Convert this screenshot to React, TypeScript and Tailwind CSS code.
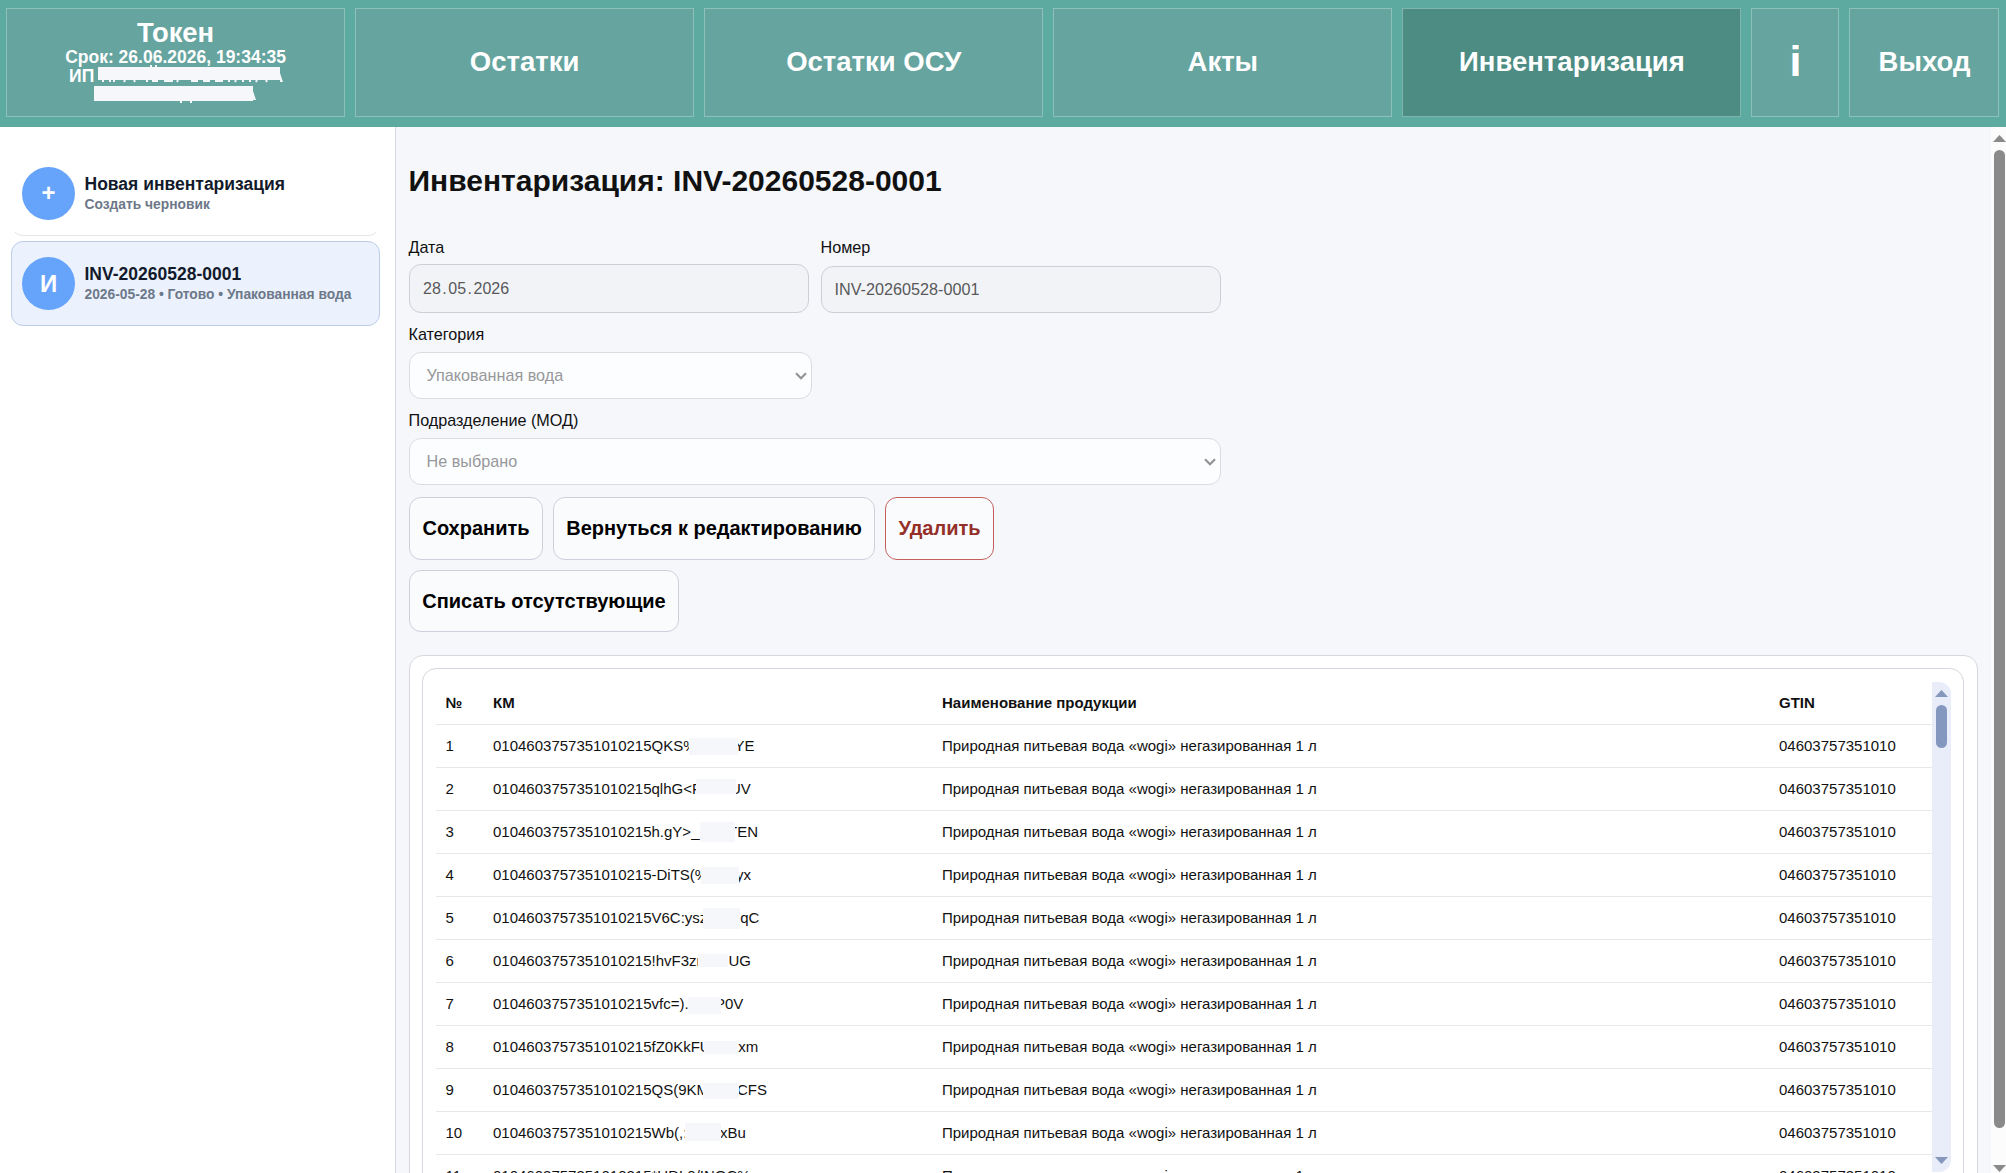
import React from "react";
import clsx from "clsx";

const navItems = [
  { id: 1, title: "Остатки", active: false },
  { id: 2, title: "Остатки ОСУ", active: false },
  { id: 3, title: "Акты", active: false },
  { id: 4, title: "Инвентаризация", active: true },
];

const PREFIX = "0104603757351010215";
const PRODUCT = "Природная питьевая вода «wogi» негазированная 1 л";
const GTIN = "04603757351010";

// mask: [left, top, width, height] inside the code cell, tailX: start of the tail
const rows = [
  { id: 1, head: "QKS%", tail: "YE", tailX: 241.5, mask: [196, 13, 49, 17] },
  { id: 2, head: "qlhG<F", tail: "UV", tailX: 237, mask: [203, 11, 40, 15] },
  { id: 3, head: "h.gY>_", tail: "TEN", tailX: 235, mask: [207, 11, 35, 20] },
  { id: 4, head: "-DiTS(%", tail: "yx", tailX: 243, mask: [208, 13, 38, 17] },
  { id: 5, head: "V6C:ysz", tail: "TqC", tailX: 238, mask: [210, 11, 37, 21] },
  { id: 6, head: "!hvF3zr", tail: "UG", tailX: 235.5, mask: [205, 14, 30, 13] },
  { id: 7, head: "vfc=).", tail: "P0V", tailX: 222, mask: [195, 14, 33, 17] },
  { id: 8, head: "fZ0KkFU", tail: ".xm", tailX: 241, mask: [211, 15, 33, 13] },
  { id: 9, head: "QS(9KM", tail: "CFS", tailX: 244, mask: [210, 14, 36, 16] },
  { id: 10, head: "Wb(,:", tail: "xBu", tailX: 227, mask: [192, 11, 36, 18] },
  { id: 11, head: "*UDL0/INGC%", tail: "", tailX: 0, mask: null },
];

const Arrow = ({ down, className }: { down?: boolean; className?: string }) => (
  <svg width="13" height="7" viewBox="0 0 13 7" className={className}>
    <path d={down ? "M0 0h13L6.5 7z" : "M0 7h13L6.5 0z"} fill="currentColor" />
  </svg>
);

const Chevron = () => (
  <svg width="12" height="8" viewBox="0 0 12 8" fill="none" className="text-[#929396]">
    <path d="M1 1.2 6 6.2l5-5" stroke="currentColor" strokeWidth="2.2" />
  </svg>
);

const Label = ({ children }: { children: React.ReactNode }) => (
  <div className="-ml-[0.5px] h-6 text-[16.2px] leading-[22px]">{children}</div>
);

const Button = ({
  children,
  className,
}: {
  children: React.ReactNode;
  className?: string;
}) => (
  <button
    className={clsx(
      "h-[62.6px] shrink-0 whitespace-nowrap rounded-xl border bg-[#fafbfd] text-center text-[20px] font-bold",
      className
    )}
  >
    {children}
  </button>
);

const Header = () => (
  <header className="flex h-[127px] shrink-0 gap-2.5 bg-[#5daba0] pl-1.5 pr-[6.5px] pt-2 font-bold text-white">
    <div className="flex h-[109px] flex-1 flex-col items-center border border-[#8cc0b9] bg-[#66a49f] pt-[9px]">
      <div className="text-[27.4px] leading-[30px]">Токен</div>
      <div className="text-[17.5px] leading-[19px]">Срок: 26.06.2026, 19:34:35</div>
      <div className="flex h-[19px] w-[213px] text-[17.5px] leading-[19px]">
        <span className="w-[29px]">ИП</span>
        <div className="h-[13px] w-[182px] bg-[#f5f7fb]">
          <svg width="185" height="16" viewBox="0 0 185 16" className="overflow-visible">
            <path
              d="M5 13v2M12 13v2M16 13v2M27 13l-1 2M36 13l1 2M49 13v2M54 14h6M66 14h9M80 13l-1 2M93 14h7M105 14h7M117 14h8M131 13v2M138 13l-1 2M145 13v2M152 13v2M159 13l-1 2M168 13l1 2M52 -1h2M57 -1h2"
              stroke="#f5f7fb"
              strokeWidth="2"
            />
            <path d="M182 6l3 9h-3z" fill="#f5f7fb" />
          </svg>
        </div>
      </div>
      <div className="mr-1 h-[15px] w-[159px] bg-[#f5f7fb]">
        <svg width="162" height="17" viewBox="0 0 162 17" className="overflow-visible">
          <path d="M159 5l3 9h-3zM86 15h2v2h-2zM96 15h2v2h-2z" fill="#f5f7fb" />
        </svg>
      </div>
    </div>
    {navItems.map((item) => (
      <div
        key={item.id}
        className={clsx(
          "flex h-[109px] flex-1 items-center justify-center border pb-0.5 text-[27.5px]",
          item.active
            ? "border-[#7fb5ad] bg-[#4c8c83]"
            : "border-[#8cc0b9] bg-[#66a49f]"
        )}
      >
        {item.title}
      </div>
    ))}
    <div className="flex h-[109px] w-[88px] items-center justify-center border border-[#8cc0b9] bg-[#66a49f] pb-[3px] text-[43px]">
      i
    </div>
    <div className="flex h-[109px] w-[150px] items-center justify-center border border-[#8cc0b9] bg-[#66a49f] pb-0.5 text-[27.5px]">
      Выход
    </div>
  </header>
);

const Sidebar = () => (
  <aside className="flex w-[396px] shrink-0 flex-col gap-[5px] border-r border-[#d3d7df] bg-white pl-[11px] pt-6 font-bold">
    <div className="flex h-[85px] w-[369px] items-center gap-[9.5px] rounded-xl border border-transparent border-b-[#e3e5e9] pl-2.5">
      <div className="flex h-[53px] w-[53px] items-center justify-center rounded-full bg-[#66a3fb] pb-0.5 text-[24px] text-white">
        +
      </div>
      <div>
        <div className="text-[17.5px] leading-[22px] text-[#121a2b]">Новая инвентаризация</div>
        <div className="text-[13.8px] leading-[19px] text-[#6d7889]">Создать черновик</div>
      </div>
    </div>
    <div className="flex h-[85px] w-[369px] items-center gap-[9.5px] rounded-xl border border-[#bccbe6] bg-[#ebf2fe] pl-2.5">
      <div className="flex h-[53px] w-[53px] items-center justify-center rounded-full bg-[#66a3fb] text-[24px] text-white">
        И
      </div>
      <div>
        <div className="text-[17.5px] leading-[22px] text-[#121a2b]">INV-20260528-0001</div>
        <div className="whitespace-nowrap text-[13.8px] leading-[19px] text-[#6d7889]">
          2026-05-28 • Готово • Упакованная вода
        </div>
      </div>
    </div>
  </aside>
);

const Form = () => (
  <div className="flex flex-col">
    <div className="flex gap-3">
      <div className="w-[400px]">
        <Label>Дата</Label>
        <div className="mt-1 flex h-[49px] items-center rounded-xl border border-[#cccfd6] bg-[#f2f3f7] pl-[13px] text-base text-[#58595b]">
          28<span className="px-[1.5px]">.</span>05<span className="px-[1.5px]">.</span>2026
        </div>
      </div>
      <div className="w-[400px]">
        <Label>Номер</Label>
        <div className="mt-1.5 flex h-[47px] items-center rounded-xl border border-[#cccfd6] bg-[#f2f3f7] pl-[12.5px] text-[16.2px] text-[#58595b]">
          INV-20260528-0001
        </div>
      </div>
    </div>
    <div className="mt-2.5">
      <Label>Категория</Label>
      <div className="mt-[5px] flex h-[47px] w-[403px] items-center justify-between rounded-xl border border-[#dadce1] bg-[#fcfdfe] pl-[16.5px] pr-1 text-[16.2px] text-[#97989b]">
        Упакованная вода
        <Chevron />
      </div>
    </div>
    <div className="mt-2.5">
      <Label>Подразделение (МОД)</Label>
      <div className="mt-[5px] flex h-[47px] w-[812px] items-center justify-between rounded-xl border border-[#dadce1] bg-[#fcfdfe] pl-[16.5px] pr-1 text-[16.2px] text-[#97989b]">
        Не выбрано
        <Chevron />
      </div>
    </div>
    <div className="mt-3 flex gap-2.5">
      <Button className="w-[134px] border-[#cdd0db] text-black">Сохранить</Button>
      <Button className="w-[322px] border-[#cdd0db] text-black">
        Вернуться к редактированию
      </Button>
      <Button className="w-[109px] border-[#c4605c] text-[#943029]">Удалить</Button>
    </div>
    <div className="mt-2.5 flex">
      <Button className="w-[270px] border-[#cdd0db] text-black">Списать отсутствующие</Button>
    </div>
  </div>
);

const CodesTable = () => (
  <div className="mt-[23px] h-[600px] w-[1569px] shrink-0 rounded-[14px] border border-[#d5d8de] bg-white py-3 pl-3 pr-[13px]">
    <div className="flex h-[560px] rounded-[14px] border border-[#d5d8de] py-[13px] pl-[13px] pr-3">
      <div className="w-[1496px] text-[15px] text-[#111]">
        <div className="flex h-[43px] items-center border-b border-[#e7e8ea] pl-[9.5px] font-bold">
          <span className="w-[47.5px]">№</span>
          <span className="w-[449px]">КМ</span>
          <span className="w-[837px]">Наименование продукции</span>
          <span>GTIN</span>
        </div>
        {rows.map((row) => (
          <div
            key={row.id}
            className="flex h-[43px] items-center border-b border-[#e7e8ea] pl-[9.5px]"
          >
            <span className="w-[47.5px]">{row.id}</span>
            <div className="relative flex h-[42px] w-[449px] items-center">
              <span>
                {PREFIX}
                {row.head}
              </span>
              <span className="absolute" style={{ left: row.tailX }}>
                {row.tail}
              </span>
              {row.mask && (
                <span
                  className="absolute bg-[#f5f7fb]"
                  style={{
                    left: row.mask[0],
                    top: row.mask[1],
                    width: row.mask[2],
                    height: row.mask[3],
                  }}
                />
              )}
            </div>
            <span className="w-[837px]">{PRODUCT}</span>
            <span>{GTIN}</span>
          </div>
        ))}
      </div>
      <div className="flex h-[490px] w-[19px] flex-col items-center rounded-r-xl bg-[#e8edf9] pb-2 pt-2 text-[#8597bb]">
        <Arrow />
        <div className="mt-2 h-[43px] w-[11px] rounded-full bg-[#8498bf]" />
        <Arrow down className="mt-auto" />
      </div>
    </div>
  </div>
);

const App = () => {
  return (
    <div className="flex h-[1173px] w-[2006px] flex-col overflow-hidden bg-[#f5f7fb] font-['Liberation_Sans',Arial,sans-serif] text-[#111]">
      <Header />
      <div className="flex min-h-0 flex-1">
        <Sidebar />
        <main className="flex min-w-0 flex-1 flex-col overflow-hidden pl-[13px] pt-[33px]">
          <h1 className="-ml-[0.5px] mb-8 h-11 shrink-0 text-[30px] font-bold leading-[42px]">
            Инвентаризация: INV-20260528-0001
          </h1>
          <Form />
          <CodesTable />
        </main>
        <div className="flex w-[15px] shrink-0 flex-col items-center bg-[#fcfcfd] pb-px pl-0.5 pt-2 text-[#8a8a8a]">
          <Arrow />
          <div className="mt-2 h-[978px] w-[11px] rounded-full bg-[#8a8a8a]" />
          <Arrow down className="mt-auto" />
        </div>
      </div>
    </div>
  );
};

export default App;
